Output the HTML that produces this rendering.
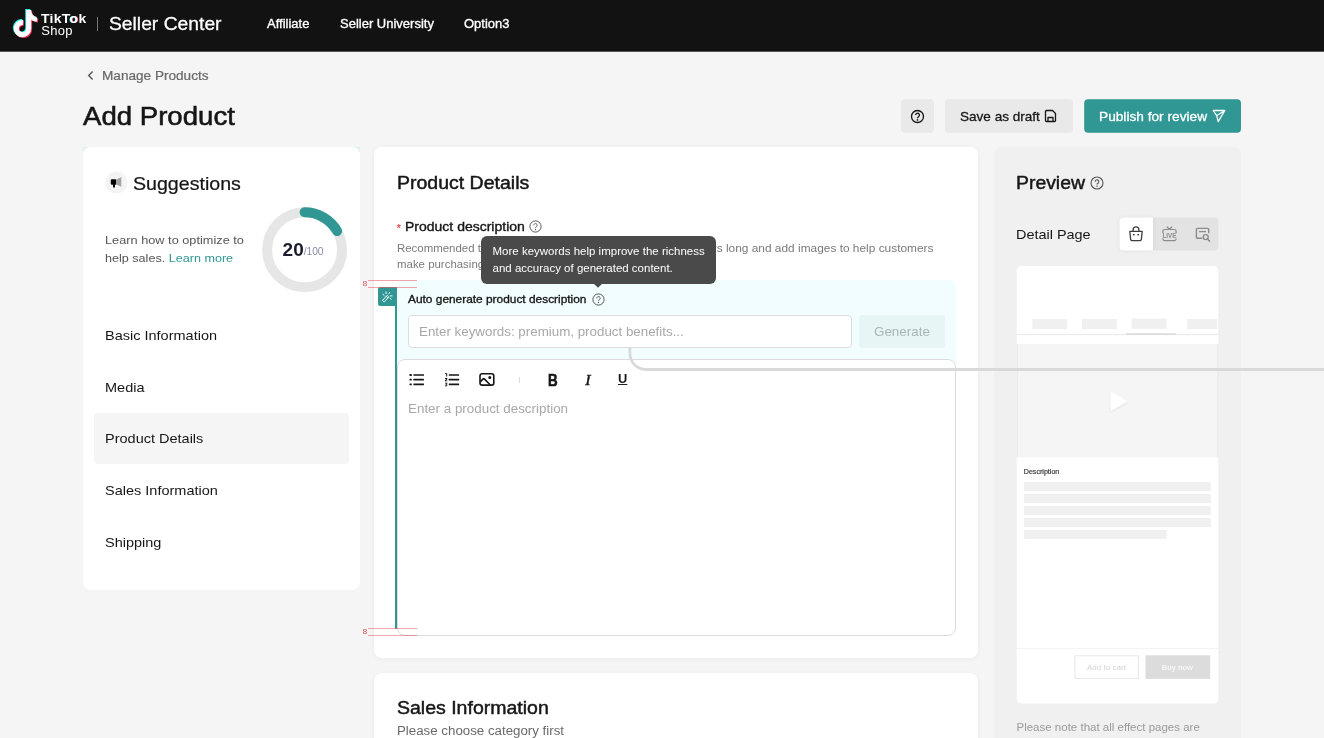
<!DOCTYPE html>
<html lang="en">
<head>
<meta charset="utf-8">
<title>Add Product - Seller Center</title>
<style>
*{box-sizing:border-box;margin:0;padding:0}
html,body{width:1324px;height:738px;overflow:hidden;background:#f5f5f5;font-family:"Liberation Sans",sans-serif;color:#161616}
.abs,.t{position:absolute;white-space:nowrap}
.t{line-height:1;transform:scaleY(.925);transform-origin:0 84.65%}
#hdr{position:absolute;left:0;top:0;width:1324px;height:51px;background:#121212}
.card{position:absolute;background:#fff;border-radius:8px}
svg{position:absolute;overflow:visible}
#root{position:absolute;left:0;top:0;width:1324px;height:738px;overflow:hidden;will-change:transform}
</style>
</head>
<body>
<div id="root">
<!-- HEADER -->
<div id="hdr">
  <svg id="logo" style="left:0;top:0" width="50" height="51" viewBox="0 0 50 51">
    <g fill="none" stroke-linecap="butt" stroke-linejoin="round">
      <g stroke="#25f4ee" color="#25f4ee" transform="translate(-0.9,-0.8)"><path d="M28.7 9.9 V28.6 A6.2 6.2 0 1 1 23 22.4" stroke-width="5"/><path d="M31 9.9 c0.4 3.9 2.6 6.8 6.1 7.5 v4.2 c-2.4 0 -4.6 -0.8 -6.1 -2.2 z" fill="currentColor" stroke="none"/></g>
      <g stroke="#fe2c55" color="#fe2c55" transform="translate(0.9,0.8)"><path d="M28.7 9.9 V28.6 A6.2 6.2 0 1 1 23 22.4" stroke-width="5"/><path d="M31 9.9 c0.4 3.9 2.6 6.8 6.1 7.5 v4.2 c-2.4 0 -4.6 -0.8 -6.1 -2.2 z" fill="currentColor" stroke="none"/></g>
      <g stroke="#fff" color="#fff"><path d="M28.7 9.9 V28.6 A6.2 6.2 0 1 1 23 22.4" stroke-width="5"/><path d="M31 9.9 c0.4 3.9 2.6 6.8 6.1 7.5 v4.2 c-2.4 0 -4.6 -0.8 -6.1 -2.2 z" fill="currentColor" stroke="none"/></g>
    </g>
  </svg>
  <div class="t" id="tiktok" style="left:41px;top:11px;font-size:14px;font-weight:700;color:#fff;letter-spacing:0.28px">TikT<span style="text-shadow:-.7px -.3px #25f4ee,.7px .4px #fe2c55">o</span>k</div>
  <div class="t" id="shop" style="left:41.3px;top:24px;font-size:13px;color:#fff;letter-spacing:0.3px">Shop</div>
  <div class="abs" style="left:97px;top:17px;width:1px;height:14px;background:#777"></div>
  <div class="t" id="sc" style="left:109px;top:14px;font-size:19.3px;color:#fff;-webkit-text-stroke:.3px #fff">Seller Center</div>
  <div class="t" id="n1" style="-webkit-text-stroke:.35px #fff;left:267px;top:17px;font-size:13px;color:#fff">Affiliate</div>
  <div class="t" id="n2" style="-webkit-text-stroke:.35px #fff;left:340px;top:17px;font-size:13px;color:#fff">Seller University</div>
  <div class="t" id="n3" style="-webkit-text-stroke:.35px #fff;left:464px;top:17px;font-size:13px;color:#fff">Option3</div>
</div>

<div class="abs" style="left:0;top:51px;width:1324px;height:1px;background:#575757"></div>
<!-- BREADCRUMB + TITLE -->
<svg style="left:87.3px;top:70.3px" width="8" height="11" viewBox="0 0 8 11"><path d="M5.6 1.6 L1.7 5.5 L5.6 9.4" fill="none" stroke="#555" stroke-width="1.4"/></svg>
<div class="t" id="bc" style="left:102px;top:68.6px;font-size:13.6px;color:#6a6a6a;-webkit-text-stroke:.25px #6a6a6a">Manage Products</div>
<div class="t" id="title" style="left:83px;top:102.3px;font-size:27.6px;color:#161616;-webkit-text-stroke:.6px #161616">Add Product</div>

<!-- TOP BUTTONS -->
<svg style="left:0;top:0" width="1324" height="140" viewBox="0 0 1324 140"><rect x="901.1" y="99.2" width="32.9" height="33.5" rx="4" fill="#e9e9e9"/><rect x="945.1" y="99.2" width="128" height="33.5" rx="4" fill="#e9e9e9"/><rect x="1084.2" y="99.2" width="156.8" height="33.5" rx="4" fill="#309795"/></svg>
<svg style="left:910px;top:108.5px" width="15" height="15" viewBox="0 0 15 15"><circle cx="7.5" cy="7.5" r="6" fill="none" stroke="#161616" stroke-width="1.3"/><path d="M5.6 6.1 a1.9 1.9 0 1 1 2.9 1.6 c-.7 .45 -1 .8 -1 1.5" fill="none" stroke="#161616" stroke-width="1.3"/><circle cx="7.5" cy="10.9" r=".85" fill="#161616"/></svg>
<div class="t" id="sad" style="left:960px;top:109.5px;font-size:13.55px;color:#161616;-webkit-text-stroke:.3px #161616">Save as draft</div>
<svg style="left:1044.3px;top:108.7px" width="13" height="14" viewBox="0 0 13 14"><path d="M1.5 2.5 a1 1 0 0 1 1 -1 h6 l3 3 v7 a1 1 0 0 1 -1 1 h-8 a1 1 0 0 1 -1 -1 z M4 12.5 v-4 h5 v4" fill="none" stroke="#161616" stroke-width="1.3" stroke-linejoin="round"/></svg>
<div class="t" id="pfr" style="left:1099px;top:109.5px;font-size:13.7px;color:#fff;-webkit-text-stroke:.3px #fff">Publish for review</div>
<svg style="left:1211.5px;top:108.8px" width="14" height="14" viewBox="0 0 14 14"><path d="M1.2 1.5 H12.8 L6.2 12.6 L4.7 6.7 Z M4.7 6.7 L12.8 1.5" fill="none" stroke="#fff" stroke-width="1.3" stroke-linejoin="round"/></svg>

<!-- LEFT CARD -->
<div class="abs" style="left:83px;top:147px;width:277px;height:8px;background:#e1f2f1"></div>
<div class="card" style="left:83px;top:147px;width:277px;height:149px;border-radius:8px 8px 1.5px 1.5px"></div>
<div class="card" style="left:83px;top:296px;width:277px;height:294px;border-radius:1.5px 1.5px 8px 8px"></div>
<svg style="left:100px;top:166px" width="40" height="32" viewBox="100 166 40 32"><circle cx="116.4" cy="182.5" r="11" fill="#f4f4f4"/><rect x="110.8" y="179.2" width="5.5" height="5.5" rx="1" fill="#000"/><rect x="113" y="184" width="2" height="3.5" rx=".5" fill="#000"/><path d="M116.1 179.7 L121.3 177.1 V186.8 L116.1 184.4 Z" fill="#a3a3a3"/></svg>
<div class="t" id="sug" style="left:133px;top:173.6px;font-size:19.6px;-webkit-text-stroke:.25px #161616">Suggestions</div>
<div class="t" id="l1" style="left:105px;top:234.3px;font-size:12.75px;color:#555">Learn how to optimize to</div>
<div class="t" id="l2" style="left:105px;top:252.3px;font-size:12.6px;color:#555">help sales. <span style="color:#309795">Learn more</span></div>
<svg style="left:261px;top:206px" width="87" height="87" viewBox="0 0 87 87">
  <circle cx="43.6" cy="43.8" r="37.5" fill="none" stroke="#e6e6e6" stroke-width="10"/>
  <path d="M43.6 6.3 A37.5 37.5 0 0 1 76.1 25.05" fill="none" stroke="#309795" stroke-width="10" stroke-linecap="round"/>
</svg>
<div class="t" id="d20" style="left:282.6px;top:240px;font-size:19px;font-weight:700;color:#1c1c2e">20</div>
<div class="t" id="d100" style="transform:none;left:303.7px;top:246.6px;font-size:10.2px;color:#8a8aa8">/100</div>

<div class="abs" style="left:94px;top:413px;width:255px;height:51px;border-radius:4px;background:#f5f5f5"></div>
<div class="t" id="m1" style="left:105px;top:328.2px;font-size:14.5px">Basic Information</div>
<div class="t" id="m2" style="left:105px;top:379.9px;font-size:14.5px">Media</div>
<div class="t" id="m3" style="left:105px;top:431.3px;font-size:14.5px">Product Details</div>
<div class="t" id="m4" style="left:105px;top:483.3px;font-size:14.5px">Sales Information</div>
<div class="t" id="m5" style="left:105px;top:534.6px;font-size:14.5px">Shipping</div>

<!-- CENTER CARD -->
<div class="card" style="left:374px;top:147px;width:604px;height:511px;box-shadow:0 1px 5px rgba(0,0,0,.05)"></div>
<div class="t" id="pd" style="left:397px;top:173px;font-size:19.5px;font-weight:400;-webkit-text-stroke:.5px #161616">Product Details</div>
<div class="t" style="left:396.7px;top:222.9px;font-size:10.6px;color:#ec3f3f;transform:none;-webkit-text-stroke:.2px #ec3f3f">*</div>
<div class="t" id="pdesc" style="left:405px;top:219.2px;font-size:14px;-webkit-text-stroke:.4px #161616">Product description</div>
<svg style="left:529px;top:220px" width="13" height="13" viewBox="0 0 13 13"><circle cx="6.5" cy="6.5" r="5.6" fill="none" stroke="#555" stroke-width="1"/><path d="M4.8 5.3 a1.7 1.7 0 1 1 2.6 1.4 c-.6 .4 -.9 .7 -.9 1.3" fill="none" stroke="#555" stroke-width="1"/><circle cx="6.5" cy="9.5" r=".7" fill="#555"/></svg>
<div class="t" id="r1" style="left:397px;top:242.7px;font-size:11.45px;color:#7a7a7a">Recommended to provide a description at least</div>
<div class="t" id="r1b" style="right:390.5px;top:242.7px;font-size:11.9px;color:#7a7a7a">500 characters long and add images to help customers</div>
<div class="t" id="r2" style="left:397px;top:258.5px;font-size:11.45px;color:#7a7a7a">make purchasing decisions.</div>

<!-- auto generate panel -->
<div class="abs" style="left:397px;top:280px;width:559px;height:91px;border-radius:8px 8px 0 0;background:#f1fdfe"></div>
<div class="abs" style="left:378px;top:287px;width:19px;height:19px;border-radius:2px 0 0 2px;background:#309795"></div>
<div class="abs" style="left:395px;top:287px;width:2px;height:342px;background:#309795"></div>
<svg style="left:381.3px;top:290.6px" width="12" height="12" viewBox="0 0 12 12"><g stroke="#fff" fill="none" stroke-width=".95" stroke-linecap="round"><rect x="1.1" y="6.5" width="7.2" height="2.3" rx=".6" transform="rotate(-48 4.7 7.65)" stroke-width=".9"/><path d="M5.2 5.2 l1.6 1.5" stroke-width=".8"/><path d="M5 .9 v1.7 M8.6 1.4 l-.7 1.3 M1.9 3.3 l1.2 1 M9.4 4.9 h1.6 M9 7.2 l1.2 1"/></g></svg>
<div class="t" id="ag" style="left:408px;top:294px;font-size:11.9px;-webkit-text-stroke:.35px #161616">Auto generate product description</div>
<svg style="left:592px;top:293px" width="13" height="13" viewBox="0 0 13 13"><circle cx="6.5" cy="6.5" r="5.6" fill="none" stroke="#555" stroke-width="1"/><path d="M4.8 5.3 a1.7 1.7 0 1 1 2.6 1.4 c-.6 .4 -.9 .7 -.9 1.3" fill="none" stroke="#555" stroke-width="1"/><circle cx="6.5" cy="9.5" r=".7" fill="#555"/></svg>
<div class="abs" style="left:408px;top:315px;width:444px;height:33px;border-radius:4px;background:#fff;border:1px solid #dcdcdc"></div>
<div class="t" id="ph" style="left:419px;top:325px;font-size:13.35px;color:#a8a8a8">Enter keywords: premium, product benefits...</div>
<div class="abs" style="left:859px;top:315px;width:86px;height:33px;border-radius:4px;background:#e7f5f5"></div>
<div class="t" id="gen" style="left:874px;top:325px;font-size:13.4px;color:#a9b6b6">Generate</div>

<!-- editor -->
<div class="abs" style="left:397px;top:359px;width:559px;height:277px;border-radius:8px;background:#fff;border:1px solid #dcdcdc"></div>
<div class="abs" style="left:395px;top:360px;width:2px;height:269px;background:#309795"></div>
<!-- toolbar icons -->
<svg style="left:409px;top:373px" width="16" height="14" viewBox="0 0 16 14"><g fill="#161616"><rect x=".5" y="1.1" width="2.3" height="1.8" rx=".5"/><rect x="4.4" y="1.15" width="10.6" height="1.7" rx=".4"/><rect x=".5" y="5.8" width="2.3" height="1.8" rx=".5"/><rect x="4.4" y="5.85" width="10.6" height="1.7" rx=".4"/><rect x=".5" y="10.4" width="2.3" height="1.8" rx=".5"/><rect x="4.4" y="10.45" width="10.6" height="1.7" rx=".4"/></g></svg>
<svg style="left:444px;top:372px" width="17" height="15" viewBox="0 0 17 15"><g fill="#161616"><rect x="4.8" y="2.15" width="10.3" height="1.7" rx=".4"/><rect x="4.8" y="6.85" width="10.3" height="1.7" rx=".4"/><rect x="4.8" y="11.45" width="10.3" height="1.7" rx=".4"/><path d="M1 1.2 h2.2 v3.4 h-1 v-2.5 h-1.2z"/><path d="M1 6.1 h2.3 v1.2 l-1.2 1.2 h1.2 v.8 h-2.4 v-.8 l1.4 -1.5 h-1.3z"/><path d="M1 10.8 h2.3 v.9 l-.8 .6 c.6 .1 .9 .5 .9 1 c0 .7 -.6 1.1 -1.4 1.1 c-.5 0 -.9 -.1 -1.2 -.4 l.4 -.7 c.2 .2 .5 .3 .8 .3 c.3 0 .5 -.1 .5 -.4 c0 -.3 -.3 -.4 -.7 -.4 h-.3 v-.6 l.8 -.6 h-1.3z"/></g></svg>
<svg style="left:478px;top:372px" width="18" height="15" viewBox="0 0 18 15"><rect x="2" y="1.8" width="13.8" height="11.3" rx="2.2" fill="none" stroke="#161616" stroke-width="1.6"/><path d="M2.3 9.9 L5.2 6.9 a.8 .8 0 0 1 1.1 0 L12.3 13" fill="none" stroke="#161616" stroke-width="1.6"/><circle cx="11.8" cy="5.6" r="1.5" fill="#161616"/></svg>
<div class="abs" style="left:519px;top:377px;width:1px;height:6px;background:#ddd"></div>
<div class="t" id="tb" style="left:548.2px;top:372.6px;font-size:15.6px;font-weight:700;-webkit-text-stroke:.55px #161616;transform:scale(.86,1.02);transform-origin:0 84.65%">B</div>
<div class="t" id="ti" style="left:585.2px;top:371.8px;font-size:16px;font-style:italic;font-family:'Liberation Serif',serif;-webkit-text-stroke:.45px #161616">I</div>
<div class="t" id="tu" style="left:618.2px;top:371.6px;font-size:13.4px;font-weight:700;text-decoration:underline;text-underline-offset:1.2px;text-decoration-thickness:1.3px;transform:scale(.96,.97)">U</div>
<div class="t" id="eph" style="left:408px;top:402.3px;font-size:13.4px;color:#a8a8a8">Enter a product description</div>

<!-- red annotations -->
<div class="abs" style="left:368px;top:280px;width:49px;height:1px;background:rgba(232,90,100,.55)"></div>
<div class="abs" style="left:368px;top:287px;width:49px;height:1px;background:rgba(232,90,100,.55)"></div>
<div class="t" style="left:362.6px;top:279.1px;font-size:8.6px;color:#e4525e">8</div>
<div class="abs" style="left:368px;top:628px;width:49px;height:1px;background:rgba(232,90,100,.55)"></div>
<div class="abs" style="left:368px;top:635px;width:49px;height:1px;background:rgba(232,90,100,.55)"></div>
<div class="t" style="left:362.6px;top:627.4px;font-size:8.6px;color:#e4525e">8</div>

<!-- tooltip -->
<div class="abs" style="left:481px;top:236px;width:235px;height:48px;border-radius:6px;background:#4a4a4a"></div>
<svg style="left:593.3px;top:283px" width="10" height="6" viewBox="0 0 10 6"><path d="M0 0 H10 L5 4.7 Z" fill="#4a4a4a"/></svg>
<div class="t" id="tt1" style="left:492.5px;top:246.2px;font-size:11.5px;color:#fff">More keywords help improve the richness</div>
<div class="t" id="tt2" style="left:492.5px;top:263px;font-size:11.5px;color:#fff">and accuracy of generated content.</div>

<!-- SALES INFO CARD -->
<div class="card" style="left:374px;top:673px;width:604px;height:120px;box-shadow:0 1px 5px rgba(0,0,0,.05)"></div>
<div class="t" id="si" style="left:397px;top:698px;font-size:19.5px;-webkit-text-stroke:.5px #161616">Sales Information</div>
<div class="t" id="pcc" style="left:397px;top:724px;font-size:13.3px;color:#6a6a6a">Please choose category first</div>

<!-- RIGHT CARD -->
<svg style="left:0;top:0" width="1324" height="738" viewBox="0 0 1324 738" shape-rendering="geometricPrecision">
  <rect x="994" y="147" width="246.8" height="640" rx="8" fill="#f0f0f0"/>
  <rect x="1119.5" y="217.5" width="99" height="32.9" rx="4" fill="#e3e3e3"/>
  <path d="M1123.5 217.5 H1153 V250.4 H1123.5 a4 4 0 0 1 -4 -4 V221.5 a4 4 0 0 1 4 -4 z" fill="#fff" style="filter:drop-shadow(0 0 2px rgba(0,0,0,.06))"/>
  <!-- phone -->
  <rect x="1016.7" y="266" width="201.6" height="437.6" rx="5" fill="#fff"/>
  <rect x="1032.3" y="319" width="35" height="10.2" fill="#f0f0f0"/>
  <rect x="1081.8" y="319" width="35" height="10.2" fill="#f0f0f0"/>
  <rect x="1131.6" y="318.6" width="35" height="10.2" fill="#f0f0f0"/>
  <rect x="1187.2" y="319" width="30" height="10.2" fill="#f0f0f0"/>
  <rect x="1016.7" y="334.1" width="201.6" height="1" fill="#e9e9e9"/>
  <rect x="1126.2" y="333.2" width="49.6" height="1.7" fill="#dcdcdc"/>
  <rect x="1016.7" y="344" width="201.6" height="113.5" fill="#f5f5f5"/>
  <rect x="1016.7" y="344" width="1" height="113.5" fill="#e6e6e6"/>
  <rect x="1217.4" y="344" width="1" height="113.5" fill="#e6e6e6"/>
  <path d="M1111.6 391.8 L1126.6 400.6 a.8 .8 0 0 1 0 1.4 L1111.6 410.8 a.7 .7 0 0 1 -1 -.6 V392.4 a.7 .7 0 0 1 1 -.6 z" fill="#fff" style="filter:drop-shadow(0 1px 1px rgba(0,0,0,.07))"/>
  <rect x="1024.1" y="482" width="186.7" height="9" fill="#f0f0f0"/>
  <rect x="1024.1" y="494" width="186.7" height="9" fill="#f0f0f0"/>
  <rect x="1024.1" y="506" width="186.7" height="9" fill="#f0f0f0"/>
  <rect x="1024.1" y="518" width="186.7" height="9" fill="#f0f0f0"/>
  <rect x="1024.1" y="530" width="142.4" height="9" fill="#f0f0f0"/>
  <rect x="1016.7" y="648.1" width="201.6" height="1" fill="#f3f3f3"/>
  <rect x="1074.9" y="655.8" width="63.5" height="22.6" fill="#fff" stroke="#e7e7e7" stroke-width="1"/>
  <rect x="1145.5" y="655.3" width="64.7" height="23.6" fill="#dcdcdc"/>
</svg>
<div class="t" id="pv" style="left:1016px;top:173px;font-size:19.4px;-webkit-text-stroke:.5px #161616">Preview</div>
<svg style="left:1090px;top:176px" width="14" height="14" viewBox="0 0 14 14"><circle cx="7" cy="7" r="6" fill="none" stroke="#555" stroke-width="1.1"/><path d="M5.2 5.7 a1.8 1.8 0 1 1 2.75 1.5 c-.65 .4 -.95 .75 -.95 1.4" fill="none" stroke="#555" stroke-width="1.1"/><circle cx="7" cy="10.2" r=".75" fill="#555"/></svg>
<div class="t" id="dp" style="left:1016px;top:226.5px;font-size:14.45px">Detail Page</div>
<svg style="left:1128px;top:224.5px" width="16" height="17" viewBox="0 0 16 17"><path d="M1.8 6.3 h12.4 l-.9 8.4 a1.1 1.1 0 0 1 -1.1 .9 h-8.4 a1.1 1.1 0 0 1 -1.1 -.9 z" fill="none" stroke="#3c3c3c" stroke-width="1.3" stroke-linejoin="round"/><path d="M5.1 6.2 v-1.4 a2.9 2.9 0 0 1 5.8 0 v1.4" fill="none" stroke="#3c3c3c" stroke-width="1.3"/><rect x="4.9" y="8.9" width="1.7" height="1.7" rx=".3" fill="#3c3c3c"/><rect x="9.4" y="8.9" width="1.7" height="1.7" rx=".3" fill="#3c3c3c"/></svg>
<svg style="left:1161px;top:226px" width="17" height="16" viewBox="0 0 17 16"><path d="M1.9 7.2 V5.3 a1.8 1.8 0 0 1 1.8 -1.8 h9.6 a1.8 1.8 0 0 1 1.8 1.8 V7.2 M1.9 12.4 v.4 a1.8 1.8 0 0 0 1.8 1.8 h9.6 a1.8 1.8 0 0 0 1.8 -1.8 v-.4 M5.8 .8 l2.7 2.5 l2.7 -2.5" fill="none" stroke="#8c8c8c" stroke-width="1.2"/><text x="8.5" y="12.1" font-size="6.9" font-weight="700" fill="#8c8c8c" text-anchor="middle" textLength="14" lengthAdjust="spacingAndGlyphs" font-family="Liberation Sans, sans-serif">LIVE</text></svg>
<svg style="left:1195px;top:226.5px" width="16" height="16" viewBox="0 0 16 16"><path d="M7.2 11.3 h-4.8 a1 1 0 0 1 -1 -1 v-7.9 a1 1 0 0 1 1 -1 h10.3 a1 1 0 0 1 1 1 v3.8 M4 4.6 h7" fill="none" stroke="#8c8c8c" stroke-width="1.4"/><circle cx="10.7" cy="10.1" r="2.5" fill="none" stroke="#8c8c8c" stroke-width="1.4"/><path d="M12.5 12 l2.5 2.6" stroke="#8c8c8c" stroke-width="1.6"/></svg>
<div class="t" id="desc" style="left:1023.8px;top:468.5px;font-size:7.1px;color:#3a3a3a;-webkit-text-stroke:.2px #3a3a3a">Description</div>
<div class="t" id="atc" style="left:1086.9px;top:663.9px;font-size:8.1px;color:#d4d4d4">Add to cart</div>
<div class="t" id="bn" style="left:1161.8px;top:664.1px;font-size:7.45px;color:#f6f6f6;font-weight:700">Buy now</div>
<div class="t" id="pn" style="left:1016.5px;top:722px;font-size:11.5px;color:#9a9a9a">Please note that all effect pages are</div>
<!-- connector -->
<svg style="left:0;top:0" width="1324" height="738" viewBox="0 0 1324 738"><path d="M629.9 347.5 V353.5 A16 16 0 0 0 645.9 369.5 H1324" fill="none" stroke="#d9d9d9" stroke-width="2.8"/></svg>
</div>
</body>
</html>
